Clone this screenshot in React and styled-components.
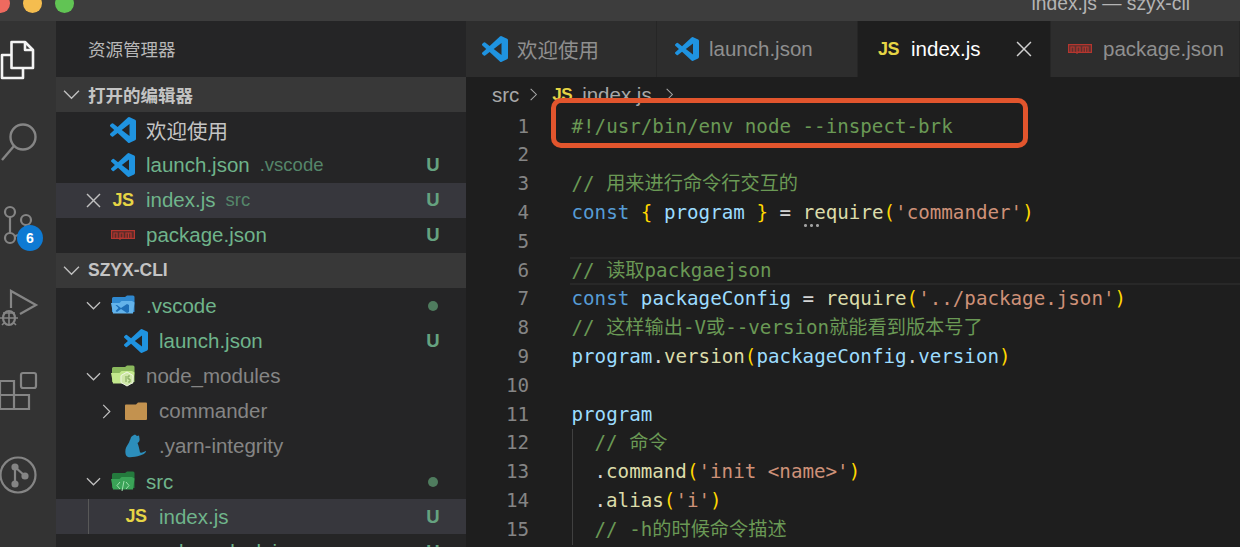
import React from 'react';
import styled, { createGlobalStyle } from 'styled-components';

const Global = createGlobalStyle`
html, body { margin:0; padding:0; background:#1e1e1e; }
body { font-family:"Liberation Sans","Noto Sans CJK SC",sans-serif; }
`;

const Window = styled.div`
width:1240px;
height:547px;
overflow:hidden;
display:flex;
flex-direction:column;
`;

const TitleBar = styled.div`
height:21px;
flex:none;
background:#3d3d3d;
display:flex;
align-items:flex-end;
overflow:hidden;
padding:0 50px 8px 0;
box-sizing:border-box;
`;

const Light = styled.span`
width:19px;
height:19px;
flex:none;
border-radius:50%;
margin-right:13px;
background:${p => p.$color};
&:first-child { margin-left:-9px; }
`;

const WindowTitle = styled.span`
margin-left:auto;
font-size:19.3px;
line-height:20px;
margin-bottom:-1px;
color:#b4b4b4;
white-space:nowrap;
`;

const Body = styled.div`
flex:1;
display:flex;
min-height:0;
`;

const ActivityBar = styled.div`
width:56px;
flex:none;
background:#333333;
display:flex;
flex-direction:column;
padding-top:14px;
box-sizing:border-box;
overflow:hidden;
`;

const ActivitySlot = styled.div`
height:83px;
flex:none;
position:relative;
color:#858585;
svg { display:block; }
`;

const Badge = styled.span`
position:absolute;
left:17px;
top:24px;
width:26px;
height:26px;
border-radius:50%;
background:#0e7ad3;
color:#fff;
font-size:14px;
font-weight:bold;
line-height:26px;
text-align:center;
`;

const Sidebar = styled.div`
width:410px;
flex:none;
background:#252526;
overflow:hidden;
`;

const SideTitle = styled.div`
height:54px;
padding:0 0 2px 32px;
display:flex;
align-items:center;
font-size:17.5px;
color:#b8b8b8;
`;

const SectionHeader = styled.div`
height:35.2px;
background:#383838;
display:flex;
align-items:center;
padding-left:7px;
font-size:17.5px;
font-weight:bold;
color:#c4c4c4;
`;

const SectionTwist = styled.span`
width:25px;
flex:none;
display:flex;
align-items:center;
color:#c0c0c0;
`;

const Row = styled.div`
height:35.2px;
position:relative;
display:flex;
align-items:center;
padding:0 26px 0 ${p => 30 + p.$depth * 13}px;
background:${p => (p.$active ? '#37373d' : 'transparent')};
${p => p.$guide && `
&::before {
  content:"";
  position:absolute;
  left:32px;
  top:0;
  bottom:0;
  width:1px;
  background:#585858;
}`}
`;

const Twist = styled.span`
width:24px;
flex:none;
display:flex;
align-items:center;
color:#c0c0c0;
`;

const FileIcon = styled.span`
width:26px;
height:26px;
flex:none;
display:flex;
align-items:center;
justify-content:center;
margin-right:10px;
`;

const JsMark = styled.span`
font-size:${p => p.$size || 18}px;
font-weight:bold;
letter-spacing:-0.5px;
color:#e6d545;
`;

const Label = styled.span`
font-size:20.5px;
white-space:nowrap;
color:${p => p.$color};
`;

const Hint = styled.span`
font-size:18.5px;
margin-left:10px;
color:#55866a;
white-space:nowrap;
`;

const Status = styled.span`
margin-left:auto;
width:14px;
text-align:center;
font-size:18.5px;
font-weight:bold;
color:#65a280;
`;

const Dot = styled.span`
margin-left:auto;
margin-right:2px;
width:10px;
height:10px;
border-radius:50%;
background:#4f7c5e;
`;

const Editor = styled.div`
flex:1;
min-width:0;
display:flex;
flex-direction:column;
background:#1e1e1e;
`;

const TabBar = styled.div`
height:56px;
flex:none;
display:flex;
background:#2d2d2d;
`;

const Tab = styled.div`
width:${p => p.$width}px;
flex:none;
box-sizing:border-box;
display:flex;
align-items:center;
padding-left:${p => p.$pad}px;
background:${p => (p.$active ? '#1e1e1e' : '#2d2d2d')};
border-right:1px solid #262626;
white-space:nowrap;
color:${p => (p.$active ? '#ffffff' : '#8f8f8f')};
font-size:20.5px;
`;

const TabIcon = styled.span`
display:flex;
align-items:center;
margin-right:${p => p.$gap}px;
`;

const TabClose = styled.span`
display:flex;
margin-left:35px;
color:#d0d0d0;
`;

const EditorPane = styled.div`
flex:1;
position:relative;
overflow:hidden;
`;

const Breadcrumbs = styled.div`
height:35.6px;
display:flex;
align-items:center;
padding-left:26px;
font-size:20.5px;
color:#a8a8a8;
`;

const Crumb = styled.span`
display:flex;
align-items:center;
margin-right:${p => p.$gap}px;
`;

const CodeLine = styled.div`
height:28.8px;
display:flex;
font-family:"DejaVu Sans Mono","Noto Sans CJK SC",monospace;
font-size:19.2px;
line-height:28.8px;
white-space:pre;
`;

const LineNo = styled.span`
width:63px;
flex:none;
text-align:right;
color:#858585;
`;

const Code = styled.span`
flex:1;
margin-left:42.5px;
box-sizing:border-box;
color:#d4d4d4;
${p => p.$nested && `
border-left:1px solid #404040;
padding-left:22px;
`}
${p => p.$current && `
margin-left:40.5px;
padding-left:2px;
border-top:2px solid #282828;
border-bottom:2px solid #282828;
line-height:24.8px;
`}
`;

const tokenColors = {
  comment: '#6a9955',
  keyword: '#569cd6',
  variable: '#9cdcfe',
  func: '#dcdcaa',
  string: '#ce9178',
  bracket: '#ffd700',
  plain: '#d4d4d4',
};

const Token = styled.span`
color:${p => tokenColors[p.$kind]};
`;

const Suggest = styled.span`
position:relative;
&::after {
  content:"";
  position:absolute;
  left:1px;
  bottom:-3px;
  width:17px;
  height:3px;
  background:radial-gradient(circle at 1.5px 1.5px,#a0a0a0 1.3px,transparent 1.6px) 0 0/6px 3px repeat-x;
}
`;

const Callout = styled.div`
position:absolute;
left:85px;
top:21px;
width:477px;
height:50px;
box-sizing:border-box;
border:5px solid #e2552d;
border-radius:10px;
pointer-events:none;
`;

const Chevron = ({ open, size = 15 }) => (
  <svg width={size} height={size} viewBox="0 0 16 16" fill="none" stroke="currentColor" strokeWidth="1.3">
    {open ? <polyline points="1,4.5 8,11.5 15,4.5" /> : <polyline points="4.5,1 11.5,8 4.5,15" />}
  </svg>
);

const CloseX = ({ size = 15 }) => (
  <svg width={size} height={size} viewBox="0 0 15 15" stroke="currentColor" strokeWidth="1.4">
    <line x1="1" y1="1" x2="14" y2="14" />
    <line x1="14" y1="1" x2="1" y2="14" />
  </svg>
);

const VSCODE = 'M23.15 2.587L18.21.21a1.494 1.494 0 0 0-1.705.29l-9.46 8.63-4.12-3.128a.999.999 0 0 0-1.276.057L.327 7.261A1 1 0 0 0 .326 8.74L3.899 12 .326 15.26a1 1 0 0 0 .001 1.479L1.65 17.94a.999.999 0 0 0 1.276.057l4.12-3.128 9.46 8.63a1.492 1.492 0 0 0 1.704.29l4.942-2.377A1.5 1.5 0 0 0 24 20.06V3.939a1.5 1.5 0 0 0-.85-1.352zm-5.146 14.861L10.826 12l7.178-5.448v10.896z';

const VsLogo = ({ size = 26 }) => (
  <svg width={size} height={size} viewBox="0 0 24 24">
    <path d={VSCODE} fill="#1f93e0" />
  </svg>
);

const NpmLogo = ({ color = '#b5362f' }) => (
  <svg width="24" height="11" viewBox="0 0 24 11" fill="none" stroke={color} strokeWidth="1.2">
    <rect x="0.6" y="0.6" width="22.8" height="7.8" fill={color} fillOpacity="0.35" />
    <path d="M3 8V3h3v5M9 10V3h3v5H9M15 8V3h2.5v5M17.5 3H20v5" />
  </svg>
);

const FOLDER_BACK = 'M2 4.5a1.5 1.5 0 0 1 1.5-1.5H15l2-1.5h6a1.5 1.5 0 0 1 1.5 1.5v15H2z';
const FOLDER_FRONT = 'M1 9h8.5l2-2H22l2.5 1.5-1.5 11H3z';

const VscodeFolder = () => (
  <svg width="26" height="24" viewBox="0 0 26 24">
    <path d={FOLDER_BACK} fill="#2f88cf" />
    <path d={FOLDER_FRONT} fill="#63b3ea" />
    <path d="M7 11l4 3 6-4 2 1v7l-2 1-6-4-4 3-1.500-1 3-3-3-3z" fill="#1d6fb8" />
  </svg>
);

const NodeFolder = () => (
  <svg width="26" height="24" viewBox="0 0 26 24">
    <path d={FOLDER_BACK} fill="#8bb95d" />
    <path d={FOLDER_FRONT} fill="#c3e88d" />
    <path d="M17 8l6 3.500v7L17 22l-6-3.500v-7z" fill="#cfe8a8" stroke="#f0f5e8" strokeWidth="1" />
    <path d="M16 12v6M20 12h-2v3h2v3h-2" fill="none" stroke="#7ea457" strokeWidth="1" />
  </svg>
);

const PlainFolder = () => (
  <svg width="22" height="18" viewBox="0 0 22 18">
    <path d="M0 3.500a1 1 0 0 1 1-1h10L13 .500h8a1 1 0 0 1 1 1V17a1 1 0 0 1-1 1H1a1 1 0 0 1-1-1z" fill="#c3924f" />
  </svg>
);

const SrcFolder = () => (
  <svg width="26" height="24" viewBox="0 0 26 24">
    <path d={FOLDER_BACK} fill="#247a3d" />
    <path d={FOLDER_FRONT} fill="#3aa357" />
    <path d="M10 12l-3 3.500 3 3.500M16 12l3 3.500-3 3.500M14 11l-2 10" fill="none" stroke="#9fe0ae" strokeWidth="1" />
  </svg>
);

const YarnCat = () => (
  <svg width="24" height="26" viewBox="0 0 24 26">
    <path d="M11 1.500l2 1.500 2-.500.500 3c.500 2-.500 3.500-2 4.500 1 2.500 2 6 2.500 9.500 2 .500 4-.500 6-1.500.500 1-2 3.500-6 4.500-4 1.500-10 2-12 1.500-2.500-1-3-4-2.500-7.500.500-3 2.500-5 3.500-7 .500-1.500 1-2.500 1.500-3.500 0-2 1.500-3 4.500-4.500z" fill="#2c8ebb" />
  </svg>
);

const editorsRows = [
  { icon: <VsLogo />, label: '欢迎使用', color: '#c4c4c4' },
  { icon: <VsLogo size={24} />, label: 'launch.json', hint: '.vscode', color: '#6fb48b', status: 'U' },
  { close: true, icon: <JsMark>JS</JsMark>, label: 'index.js', hint: 'src', color: '#6fb48b', status: 'U', active: true },
  { icon: <NpmLogo />, label: 'package.json', color: '#6fb48b', status: 'U' },
];

const treeRows = [
  { depth: 0, open: true, icon: <VscodeFolder />, label: '.vscode', color: '#6fb48b', dot: true },
  { depth: 1, icon: <VsLogo size={24} />, label: 'launch.json', color: '#6fb48b', status: 'U' },
  { depth: 0, open: true, icon: <NodeFolder />, label: 'node_modules', color: '#858585' },
  { depth: 1, open: false, icon: <PlainFolder />, label: 'commander', color: '#858585' },
  { depth: 1, icon: <YarnCat />, label: '.yarn-integrity', color: '#858585' },
  { depth: 0, open: true, icon: <SrcFolder />, label: 'src', color: '#6fb48b', dot: true },
  { depth: 1, icon: <JsMark>JS</JsMark>, label: 'index.js', color: '#6fb48b', status: 'U', active: true, guide: true },
  { depth: 0, icon: <NpmLogo />, label: 'package-lock.json', color: '#6fb48b', status: 'U' },
];

const c = t => <Token $kind="comment">{t}</Token>;
const k = t => <Token $kind="keyword">{t}</Token>;
const v = t => <Token $kind="variable">{t}</Token>;
const f = t => <Token $kind="func">{t}</Token>;
const s = t => <Token $kind="string">{t}</Token>;
const b = t => <Token $kind="bracket">{t}</Token>;
const p = t => <Token $kind="plain">{t}</Token>;

const lines = [
  { code: c('#!/usr/bin/env node --inspect-brk') },
  { code: null },
  { code: c('// 用来进行命令行交互的') },
  { code: <>{k('const')} {b('{')} {v('program')} {b('}')} {p('=')} <Token $kind="func"><Suggest>r</Suggest>equire</Token>{b('(')}{s("'commander'")}{b(')')}</> },
  { code: null },
  { code: c('// 读取packgaejson'), current: true },
  { code: <>{k('const')} {v('packageConfig')} {p('=')} {f('require')}{b('(')}{s("'../package.json'")}{b(')')}</> },
  { code: c('// 这样输出-V或--version就能看到版本号了') },
  { code: <>{v('program')}{p('.')}{f('version')}{b('(')}{v('packageConfig')}{p('.')}{v('version')}{b(')')}</> },
  { code: null },
  { code: v('program') },
  { code: c('// 命令'), nested: true },
  { code: <>{p('.')}{f('command')}{b('(')}{s("'init <name>'")}{b(')')}</>, nested: true },
  { code: <>{p('.')}{f('alias')}{b('(')}{s("'i'")}{b(')')}</>, nested: true },
  { code: c('// -h的时候命令描述'), nested: true },
];

function FileRow({ row }) {
  return (
    <Row $depth={row.depth || 0} $active={row.active} $guide={row.guide}>
      <Twist>
        {row.close && <CloseX />}
        {row.open !== undefined && <Chevron open={row.open} />}
      </Twist>
      <FileIcon>{row.icon}</FileIcon>
      <Label $color={row.color}>{row.label}</Label>
      {row.hint && <Hint>{row.hint}</Hint>}
      {row.status && <Status>{row.status}</Status>}
      {row.dot && <Dot />}
    </Row>
  );
}

function Activity() {
  return (
    <ActivityBar>
      <ActivitySlot>
        <svg width="40" height="48" viewBox="0 0 40 48" fill="none" stroke="#f4f4f4" strokeWidth="2.6" strokeLinejoin="round">
          <path d="M11.500 7h13.500l8 8v18H11.500z" />
          <path d="M25 7v8h8" />
          <path d="M11.500 20H2v23h21V33" />
        </svg>
      </ActivitySlot>
      <ActivitySlot>
        <svg width="40" height="48" viewBox="0 0 40 48" fill="none" stroke="currentColor" strokeWidth="2.4">
          <circle cx="23" cy="19" r="12.500" />
          <line x1="14" y1="28" x2="2" y2="42" />
        </svg>
      </ActivitySlot>
      <ActivitySlot>
        <svg width="40" height="48" viewBox="0 0 40 48" fill="none" stroke="currentColor" strokeWidth="2.2">
          <circle cx="10" cy="11" r="5" />
          <circle cx="26" cy="19" r="5" />
          <circle cx="10" cy="37" r="5" />
          <path d="M10 16v16M15 35c6-1 10-6 11-11" />
        </svg>
        <Badge>6</Badge>
      </ActivitySlot>
      <ActivitySlot>
        <svg width="40" height="48" viewBox="0 0 40 48" fill="none" stroke="currentColor" strokeWidth="2.2">
          <path d="M11 24V7l25 14-16 9" />
          <ellipse cx="9" cy="34" rx="6" ry="7" />
          <path d="M3 29h12M0 34h18M2 41l2-2M16 41l-2-2M9 27v14" strokeWidth="1.6" />
        </svg>
      </ActivitySlot>
      <ActivitySlot>
        <svg width="40" height="48" viewBox="0 0 40 48" fill="none" stroke="currentColor" strokeWidth="2.2">
          <rect x="21" y="6" width="15" height="15" rx="2" />
          <path d="M0 14h14v14h15v14H0z" />
          <path d="M0 28h14v14" />
        </svg>
      </ActivitySlot>
      <ActivitySlot>
        <svg width="40" height="48" viewBox="0 0 40 48" fill="none" stroke="currentColor" strokeWidth="2.2">
          <circle cx="18" cy="25" r="17.500" />
          <circle cx="15" cy="17" r="2.500" fill="currentColor" />
          <circle cx="15" cy="34" r="2.500" fill="currentColor" />
          <circle cx="25" cy="26" r="2.500" fill="currentColor" />
          <path d="M15 17v17M15 17l10 9" />
        </svg>
      </ActivitySlot>
    </ActivityBar>
  );
}

export default function App() {
  return (
    <Window>
      <Global />
      <TitleBar>
        <Light $color="#ee6a5f" />
        <Light $color="#f5bd4f" />
        <Light $color="#61c454" />
        <WindowTitle>index.js — szyx-cli</WindowTitle>
      </TitleBar>
      <Body>
        <Activity />
        <Sidebar>
          <SideTitle>资源管理器</SideTitle>
          <SectionHeader>
            <SectionTwist><Chevron open size={17} /></SectionTwist>打开的编辑器
          </SectionHeader>
          {editorsRows.map(row => <FileRow key={row.label} row={row} />)}
          <SectionHeader>
            <SectionTwist><Chevron open size={17} /></SectionTwist>SZYX-CLI
          </SectionHeader>
          {treeRows.map(row => <FileRow key={row.label + row.depth} row={row} />)}
        </Sidebar>
        <Editor>
          <TabBar>
            <Tab $width={191} $pad={16}>
              <TabIcon $gap={9}><VsLogo /></TabIcon>欢迎使用
            </Tab>
            <Tab $width={201} $pad={18}>
              <TabIcon $gap={10}><VsLogo size={24} /></TabIcon>launch.json
            </Tab>
            <Tab $width={193} $pad={20} $active>
              <TabIcon $gap={12}><JsMark $size={18}>JS</JsMark></TabIcon>index.js
              <TabClose><CloseX size={16} /></TabClose>
            </Tab>
            <Tab $width={189} $pad={17}>
              <TabIcon $gap={11}><NpmLogo /></TabIcon>package.json
            </Tab>
          </TabBar>
          <EditorPane>
            <Breadcrumbs>
              <Crumb $gap={8}>src</Crumb>
              <Crumb $gap={12}><Chevron size={13} /></Crumb>
              <Crumb $gap={10}><JsMark $size={17}>JS</JsMark></Crumb>
              <Crumb $gap={11}>index.js</Crumb>
              <Crumb $gap={0}><Chevron size={13} /></Crumb>
            </Breadcrumbs>
            {lines.map((line, i) => (
              <CodeLine key={i}>
                <LineNo>{i + 1}</LineNo>
                <Code $nested={line.nested} $current={line.current}>{line.code}</Code>
              </CodeLine>
            ))}
            <Callout />
          </EditorPane>
        </Editor>
      </Body>
    </Window>
  );
}
